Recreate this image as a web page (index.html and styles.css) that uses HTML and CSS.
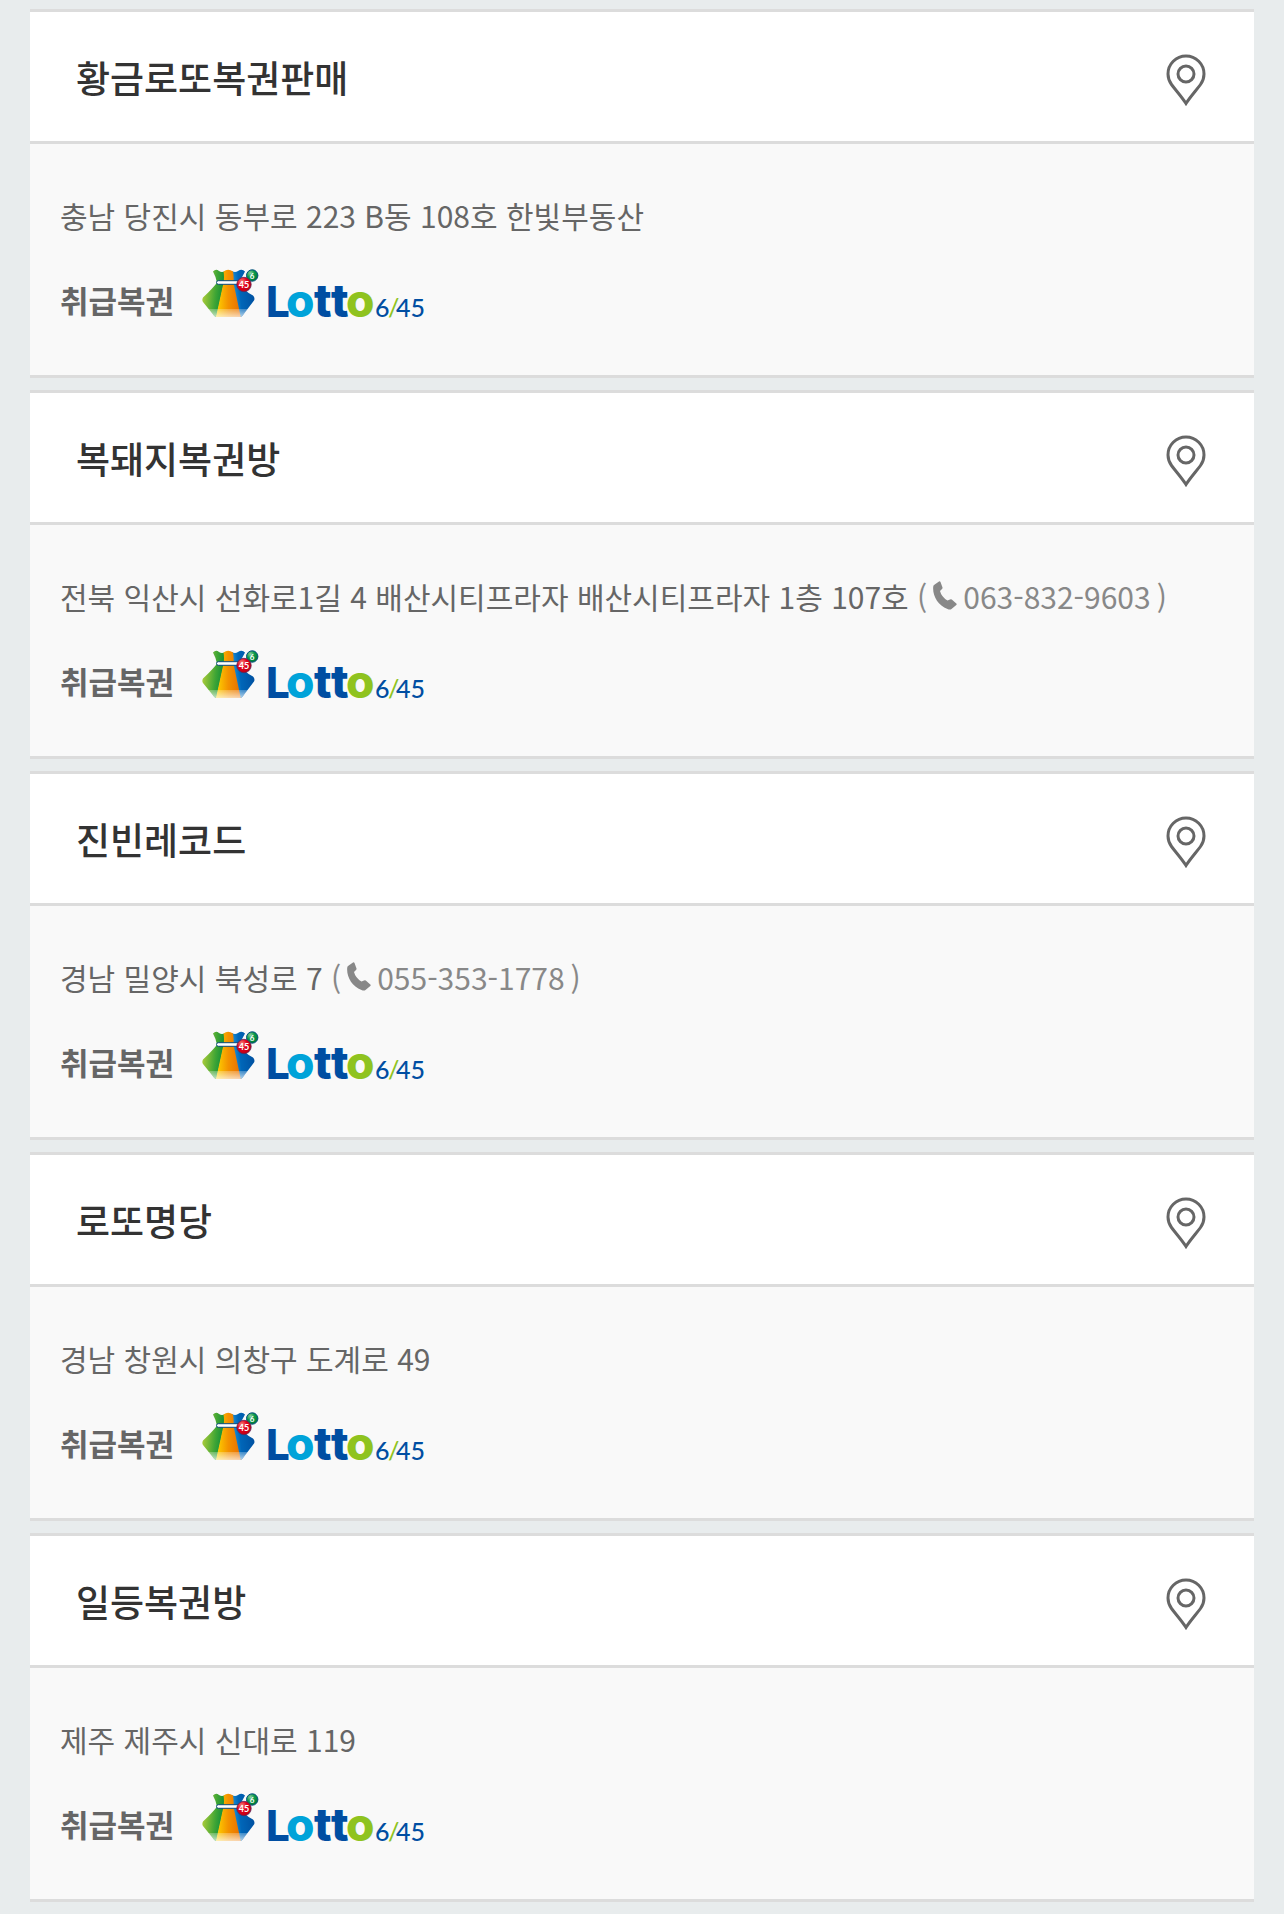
FILE: index.html
```html
<!DOCTYPE html>
<html lang="ko">
<head>
    <meta charset="UTF-8">
    <meta name="viewport" content="width=device-width, initial-scale=1.0">
    <title>로또 판매점</title>
    <link rel="stylesheet" href="styles.css">
</head>
<body>
    <svg class="sprite" width="0" height="0" aria-hidden="true">
        <defs>
            <linearGradient id="bag-green" x1="0" x2="1" y1="0.3" y2="0.5">
                <stop offset="0" stop-color="#b5cf3a"/>
                <stop offset="0.6" stop-color="#3fa535"/>
                <stop offset="1" stop-color="#078a3a"/>
            </linearGradient>
            <linearGradient id="bag-orange" x1="0" x2="1" y1="0" y2="0">
                <stop offset="0" stop-color="#ffd400"/>
                <stop offset="0.5" stop-color="#f39200"/>
                <stop offset="1" stop-color="#e86f00"/>
            </linearGradient>
            <linearGradient id="bag-blue" x1="0" x2="1" y1="0.5" y2="0.3">
                <stop offset="0" stop-color="#2ba9e8"/>
                <stop offset="0.4" stop-color="#0066b8"/>
                <stop offset="1" stop-color="#004f9f"/>
            </linearGradient>
            <linearGradient id="bag-fade" x1="0" x2="0" y1="0" y2="1">
                <stop offset="0" stop-color="#fff" stop-opacity="0.25"/>
                <stop offset="1" stop-color="#fff" stop-opacity="0.7"/>
            </linearGradient>
            <radialGradient id="ball-red" cx="0.35" cy="0.3" r="0.7">
                <stop offset="0" stop-color="#f58a80"/>
                <stop offset="0.5" stop-color="#e2001a"/>
                <stop offset="1" stop-color="#c00016"/>
            </radialGradient>
            <radialGradient id="ball-green" cx="0.35" cy="0.3" r="0.7">
                <stop offset="0" stop-color="#8fd0a0"/>
                <stop offset="0.5" stop-color="#0b9a48"/>
                <stop offset="1" stop-color="#007a38"/>
            </radialGradient>
        </defs>
        <symbol id="pin" viewBox="0 0 40 52">
            <path d="M20 49.500C15.500 42.500 9.500 36 5.500 30.500C3 27 2 24 2 20A18 18 0 0 1 38 20C38 24 37 27 34.500 30.500C30.500 36 24.500 42.500 20 49.500Z" fill="none" stroke="#666" stroke-width="3"/>
            <circle cx="20" cy="20" r="8" fill="none" stroke="#666" stroke-width="3"/>
        </symbol>
        <symbol id="phone" viewBox="0 0 24 29">
            <path d="M1 4L6 .5Q7 0 7.500 1L9.500 6.500Q9.700 7.500 9 8L7 10Q8.500 16 14.500 19.500L17 18.500Q18 18 18.800 18.600L23.300 22.500Q24 23.200 23.300 24L18.500 28Q17 29 14.500 28C5 24.500-.5 15 .2 6Q.3 4.500 1 4Z" fill="#888"/>
        </symbol>
        <symbol id="bag" viewBox="0 0 57 49">
            <path d="M11 2.500Q14-.5 17 2Q20 4 23 2L22 13.700L14.500 48Q13 48 11.500 46L1 33Q-.3 31 1 28.500Q10 20 15 13.700Q14 8 11 2.500Z" fill="url(#bag-green)"/>
            <path d="M30 2Q33 4 36 2Q40-.5 43 2.500L37 13.700Q42 22 51 26.500Q53.300 29 52 31.500L41 46Q40 48 38 48L28 13.700Z" fill="url(#bag-blue)"/>
            <path d="M21.500 2.500Q26-1 31 2.500Q32 8 31.500 13.700L38.700 48H14L21.500 13.700Q22.500 8 21.500 2.500Z" fill="url(#bag-orange)"/>
            <path d="M6 40H46L41 46Q40 48 38 48H14Q12 47 11.500 46Z" fill="url(#bag-fade)"/>
            <rect x="14.500" y="11.700" width="24" height="3.600" rx="1.800" fill="#fff" stroke="#0a4a7c"/>
            <circle cx="50.200" cy="6.500" r="5.700" fill="url(#ball-green)" stroke="#004f80"/>
            <circle cx="42" cy="15.500" r="7.200" fill="url(#ball-red)" stroke="#5d2457" stroke-width=".8"/>
        </symbol>
    </svg>

    <ul class="shop-list">
        <li class="shop">
            <div class="shop-head">
                <h2>황금로또복권판매</h2>
                <button type="button" class="map-btn" aria-label="지도 보기"><svg><use href="#pin"/></svg></button>
            </div>
            <div class="shop-body">
                <p class="address">충남 당진시 동부로 223 B동 108호 한빛부동산</p>
                <div class="lottery">
                    <strong>취급복권</strong>
                    <svg class="logo" viewBox="0 0 224 49">
                        <use href="#bag" width="57" height="49"/>
                        <text class="ball-text" x="42" y="19" font-size="9">45</text>
                        <text class="ball-text" x="50" y="10" font-size="8">6</text>
                        <text class="word" y="48"><tspan class="cap" x="64">L</tspan><tspan class="sky" x="84">o</tspan><tspan x="112">t</tspan><tspan x="129">t</tspan><tspan class="lime" x="144">o</tspan></text>
                        <text class="num" y="48"><tspan x="173">6</tspan><tspan class="lime" x="186">/</tspan><tspan x="194">45</tspan></text>
                    </svg>
                </div>
            </div>
        </li>
        <li class="shop">
            <div class="shop-head">
                <h2>복돼지복권방</h2>
                <button type="button" class="map-btn" aria-label="지도 보기"><svg><use href="#pin"/></svg></button>
            </div>
            <div class="shop-body">
                <p class="address">전북 익산시 선화로1길 4 배산시티프라자 배산시티프라자 1층 107호 <span class="tel">(<a href="tel:063-832-9603"><svg><use href="#phone"/></svg>063-832-9603</a>)</span></p>
                <div class="lottery">
                    <strong>취급복권</strong>
                    <svg class="logo" viewBox="0 0 224 49">
                        <use href="#bag" width="57" height="49"/>
                        <text class="ball-text" x="42" y="19" font-size="9">45</text>
                        <text class="ball-text" x="50" y="10" font-size="8">6</text>
                        <text class="word" y="48"><tspan class="cap" x="64">L</tspan><tspan class="sky" x="84">o</tspan><tspan x="112">t</tspan><tspan x="129">t</tspan><tspan class="lime" x="144">o</tspan></text>
                        <text class="num" y="48"><tspan x="173">6</tspan><tspan class="lime" x="186">/</tspan><tspan x="194">45</tspan></text>
                    </svg>
                </div>
            </div>
        </li>
        <li class="shop">
            <div class="shop-head">
                <h2>진빈레코드</h2>
                <button type="button" class="map-btn" aria-label="지도 보기"><svg><use href="#pin"/></svg></button>
            </div>
            <div class="shop-body">
                <p class="address">경남 밀양시 북성로 7 <span class="tel">(<a href="tel:055-353-1778"><svg><use href="#phone"/></svg>055-353-1778</a>)</span></p>
                <div class="lottery">
                    <strong>취급복권</strong>
                    <svg class="logo" viewBox="0 0 224 49">
                        <use href="#bag" width="57" height="49"/>
                        <text class="ball-text" x="42" y="19" font-size="9">45</text>
                        <text class="ball-text" x="50" y="10" font-size="8">6</text>
                        <text class="word" y="48"><tspan class="cap" x="64">L</tspan><tspan class="sky" x="84">o</tspan><tspan x="112">t</tspan><tspan x="129">t</tspan><tspan class="lime" x="144">o</tspan></text>
                        <text class="num" y="48"><tspan x="173">6</tspan><tspan class="lime" x="186">/</tspan><tspan x="194">45</tspan></text>
                    </svg>
                </div>
            </div>
        </li>
        <li class="shop">
            <div class="shop-head">
                <h2>로또명당</h2>
                <button type="button" class="map-btn" aria-label="지도 보기"><svg><use href="#pin"/></svg></button>
            </div>
            <div class="shop-body">
                <p class="address">경남 창원시 의창구 도계로 49</p>
                <div class="lottery">
                    <strong>취급복권</strong>
                    <svg class="logo" viewBox="0 0 224 49">
                        <use href="#bag" width="57" height="49"/>
                        <text class="ball-text" x="42" y="19" font-size="9">45</text>
                        <text class="ball-text" x="50" y="10" font-size="8">6</text>
                        <text class="word" y="48"><tspan class="cap" x="64">L</tspan><tspan class="sky" x="84">o</tspan><tspan x="112">t</tspan><tspan x="129">t</tspan><tspan class="lime" x="144">o</tspan></text>
                        <text class="num" y="48"><tspan x="173">6</tspan><tspan class="lime" x="186">/</tspan><tspan x="194">45</tspan></text>
                    </svg>
                </div>
            </div>
        </li>
        <li class="shop">
            <div class="shop-head">
                <h2>일등복권방</h2>
                <button type="button" class="map-btn" aria-label="지도 보기"><svg><use href="#pin"/></svg></button>
            </div>
            <div class="shop-body">
                <p class="address">제주 제주시 신대로 119</p>
                <div class="lottery">
                    <strong>취급복권</strong>
                    <svg class="logo" viewBox="0 0 224 49">
                        <use href="#bag" width="57" height="49"/>
                        <text class="ball-text" x="42" y="19" font-size="9">45</text>
                        <text class="ball-text" x="50" y="10" font-size="8">6</text>
                        <text class="word" y="48"><tspan class="cap" x="64">L</tspan><tspan class="sky" x="84">o</tspan><tspan x="112">t</tspan><tspan x="129">t</tspan><tspan class="lime" x="144">o</tspan></text>
                        <text class="num" y="48"><tspan x="173">6</tspan><tspan class="lime" x="186">/</tspan><tspan x="194">45</tspan></text>
                    </svg>
                </div>
            </div>
        </li>
    </ul>
</body>
</html>
```
FILE: styles.css
```css
* {
    box-sizing: border-box;
}
body {
    margin: 0;
    background: #e8eced;
    color: #666;
    font-family: "Noto Sans CJK KR", sans-serif;
    font-size: 31px;
    line-height: 46px;
}
.sprite {
    position: absolute;
}
.shop-list {
    display: flex;
    flex-direction: column;
    gap: 12px;
    margin: 0;
    padding: 9px 30px 12px;
    list-style: none;
}
.shop {
    border-top: 3px solid #dcdcdc;
    border-bottom: 3px solid #dcdcdc;
    background: #f9f9f9;
}
.shop-head {
    display: flex;
    align-items: flex-end;
    justify-content: space-between;
    padding: 37px 48px 35px 46px;
    border-bottom: 3px solid #dcdcdc;
    background: #fff;
}
.shop-head h2 {
    margin: 0;
    color: #333;
    font-size: 37px;
    font-weight: 500;
    line-height: 57px;
}
.map-btn {
    padding: 0;
    border: 0;
    background: none;
    cursor: pointer;
}
.map-btn svg {
    display: block;
    width: 40px;
    height: 52px;
}
.shop-body {
    padding: 48px 30px 52px;
}
.address {
    margin: 0 0 32px;
    font-size: 30px;
}
.tel a,
.tel {
    color: #888;
    text-decoration: none;
}
.tel a {
    margin: 0 6px;
}
.tel svg {
    width: 24px;
    height: 29px;
    margin-right: 6px;
    vertical-align: -1px;
}
.lottery {
    display: flex;
    align-items: flex-end;
    gap: 28px;
    height: 53px;
}
.lottery strong {
    font-weight: 700;
}
.logo {
    width: 224px;
    height: 49px;
    margin-bottom: 5px;
    overflow: visible;
}
.word {
    fill: #004ea2;
    font-family: Inter, sans-serif;
    font-size: 46px;
    font-weight: 800;
}
.cap {
    font-size: 42px;
}
.sky {
    fill: #00a3d9;
}
.lime {
    fill: #8fc31f;
}
.num {
    fill: #004ea2;
    font-family: Lato, sans-serif;
    font-size: 25px;
    font-weight: 500;
}
.ball-text {
    fill: #fff;
    font-family: Lato, sans-serif;
    font-weight: 700;
    text-anchor: middle;
}
```
